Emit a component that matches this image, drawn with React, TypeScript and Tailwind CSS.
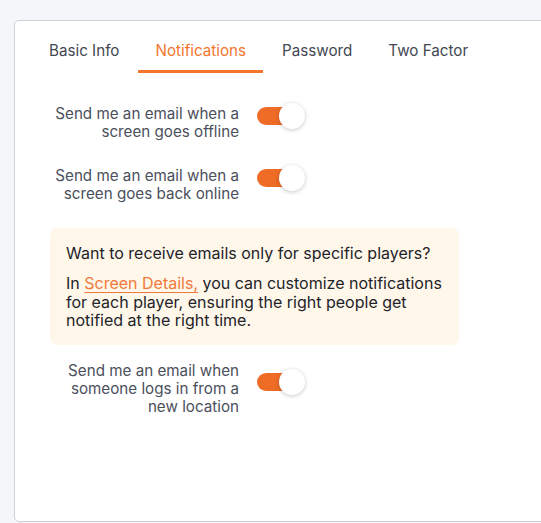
import { useState } from "react";

const tabs = ["Basic Info", "Notifications", "Password", "Two Factor"];

function Toggle({ on, onClick }: { on: boolean; onClick: () => void }) {
  return (
    <button
      onClick={onClick}
      className="relative w-[48px] h-[26px] shrink-0 mb-[13px]"
    >
      <span
        className={
          on
            ? "absolute left-0 top-[4px] w-[40px] h-[18px] rounded-full bg-[#ee6c26]"
            : "absolute left-0 top-[4px] w-[40px] h-[18px] rounded-full bg-[#c9ccd3]"
        }
      />
      <span
        className={
          on
            ? "absolute right-0 top-0 w-[26px] h-[26px] rounded-full bg-white shadow-[0_1px_4px_rgba(0,0,0,0.22)]"
            : "absolute left-[-4px] top-0 w-[26px] h-[26px] rounded-full bg-white shadow-[0_1px_4px_rgba(0,0,0,0.22)]"
        }
      />
    </button>
  );
}

function SettingRow({
  label,
  on,
  onToggle,
}: {
  label: string;
  on: boolean;
  onToggle: () => void;
}) {
  return (
    <div className="flex items-center gap-[18px]">
      <p className="w-[190px] text-right text-[15.2px] leading-[18px] text-[#4b505c]">
        {label}
      </p>
      <Toggle on={on} onClick={onToggle} />
    </div>
  );
}

export default function App() {
  const [active, setActive] = useState("Notifications");
  const [offline, setOffline] = useState(true);
  const [online, setOnline] = useState(true);
  const [newLocation, setNewLocation] = useState(true);

  return (
    <div
      className="min-h-screen w-[541px] h-[523px] overflow-hidden bg-[#f5f6fa] pt-[20px] pl-[14px]"
      style={{ fontFamily: "Inter, 'Noto Sans', sans-serif" }}
    >
      <div className="w-[580px] h-[502px] bg-white border border-[#cfd2d9] rounded-[5px]">
        <div className="flex gap-[2px] pl-[17px] pt-[20px]">
          {tabs.map((tab) => (
            <button
              key={tab}
              onClick={() => setActive(tab)}
              className={
                tab === active
                  ? "px-[17px] pb-[9px] text-[15.2px] leading-[20px] text-[#f2762e] border-b-[3px] border-[#f2762e]"
                  : "px-[17px] pb-[9px] text-[15.2px] leading-[20px] text-[#434852] border-b-[3px] border-transparent"
              }
            >
              {tab}
            </button>
          ))}
        </div>

        <div className="pl-[34px] pt-[30px]">
          <SettingRow
            label="Send me an email when a screen goes offline"
            on={offline}
            onToggle={() => setOffline(!offline)}
          />
          <div className="mt-[23px]">
            <SettingRow
              label="Send me an email when a screen goes back online"
              on={online}
              onToggle={() => setOnline(!online)}
            />
          </div>

          <div className="mt-[24px] ml-[1px] w-[409px] rounded-[7px] bg-[#fef7ea] px-4 pt-4 pb-[15px] text-[16px] leading-[18px] text-[#1f2329]">
            <p>Want to receive emails only for specific players?</p>
            <p className="mt-[12px] leading-[18.5px]">
              In{" "}
              <a
                href="#"
                className="text-[#f07a3c] underline underline-offset-[3px] decoration-[1px]"
              >
                Screen Details,
              </a>{" "}
              you can customize notifications for each player, ensuring the
              right people get notified at the right time.
            </p>
          </div>

          <div className="mt-[17px]">
            <SettingRow
              label="Send me an email when someone logs in from a new location"
              on={newLocation}
              onToggle={() => setNewLocation(!newLocation)}
            />
          </div>
        </div>
      </div>
    </div>
  );
}
